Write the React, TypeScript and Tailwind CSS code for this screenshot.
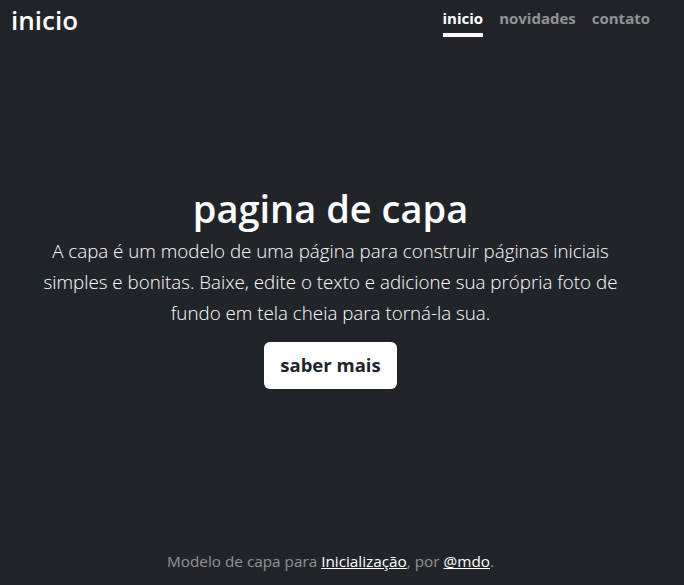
const App = () => {
  return (
    <div className="h-[585px] w-full bg-[#212529] text-white font-['Open_Sans',sans-serif] overflow-hidden">
      <div className="flex h-full w-[661px] flex-col px-[11px] text-center">
        <header className="flex items-start justify-between pt-[2px]">
          <h3 className="text-[26px] font-semibold leading-[36px]">inicio</h3>
          <nav className="flex gap-4 pt-[6px]">
            <a className="border-b-4 border-white pb-[5px] text-[15px] font-bold leading-[20px] text-white">
              inicio
            </a>
            <a className="text-[15px] font-bold leading-[20px] text-white/50">novidades</a>
            <a className="text-[15px] font-bold leading-[20px] text-white/50">contato</a>
          </nav>
        </header>

        <main className="my-auto flex flex-col items-center pb-[14px]">
          <h1 className="text-[38px] font-semibold leading-[46px]">pagina de capa</h1>
          <p className="mt-[4px] text-[18.75px] font-light leading-[31px]">
            A capa é um modelo de uma página para construir páginas iniciais
            <br />
            simples e bonitas. Baixe, edite o texto e adicione sua própria foto de
            <br />
            fundo em tela cheia para torná-la sua.
          </p>
          <button className="mt-[14px] h-[47px] w-[133px] rounded-[6px] bg-white text-[18.5px] font-bold text-[#212529]">
            saber mais
          </button>
        </main>

        <footer className="pb-[12px] text-[15.3px] leading-[24px] text-white/50">
          Modelo de capa para{" "}
          <a className="text-white underline">Inicialização</a>, por{" "}
          <a className="text-white underline">@mdo</a>.
        </footer>
      </div>
    </div>
  );
};

export default App;
